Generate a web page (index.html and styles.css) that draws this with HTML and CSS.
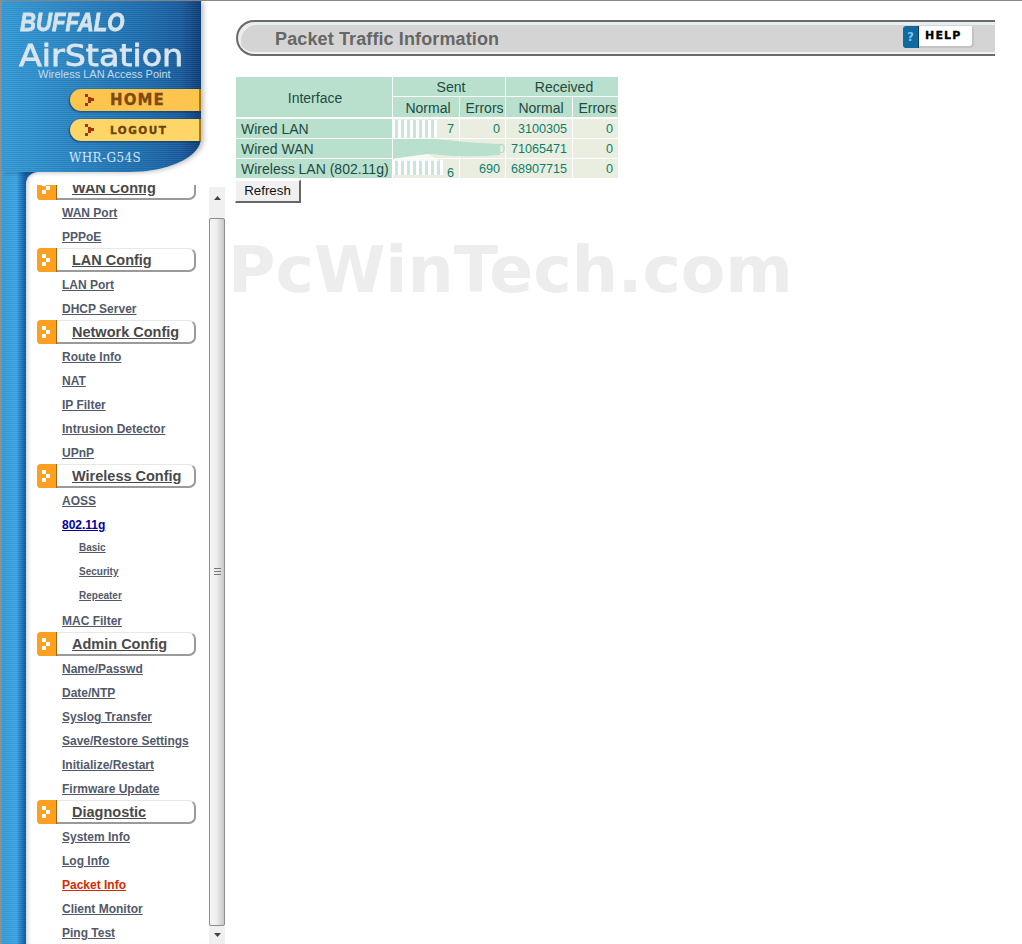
FILE: index.html
```html
<!DOCTYPE html>
<html lang="en">
<head>
<meta charset="utf-8">
<title>Packet Traffic Information</title>
<link rel="stylesheet" href="styles.css">
</head>
<body>
<div class="page">
  <aside class="side">
    <header class="brand">
      <div class="logo-buffalo">BUFFALO</div>
      <div class="logo-air">AirStation</div>
      <div class="logo-sub">Wireless LAN Access Point</div>
      <a class="pill pill-home" href="#">
        <svg class="pill-mark" width="9" height="12" viewBox="0 0 9 12"><path d="M0 0h3v3H0zM3 3h3v3H3zM6 4h3v3H6zM3 6h3v3H3zM0 9h3v3H0z" fill="#a5350c"/></svg>
        <span>HOME</span>
      </a>
      <a class="pill pill-logout" href="#">
        <svg class="pill-mark" width="9" height="12" viewBox="0 0 9 12"><path d="M0 0h3v3H0zM3 3h3v3H3zM6 4h3v3H6zM3 6h3v3H3zM0 9h3v3H0z" fill="#a5350c"/></svg>
        <span>LOGOUT</span>
      </a>
      <div class="model">WHR-G54S</div>
    </header>
    <div class="menu-area">
      <div class="menu-panel">
        <nav class="menu-clip">
          <ul class="menu">
            <li class="sec"><span class="sec-mark"><svg width="9" height="12" viewBox="0 0 9 12"><path d="M0 0h4v4H0zM4 4h4v4H4zM0 8h4v4H0z" fill="#fff"/></svg></span><a href="#">WAN Config</a></li>
            <li class="item"><a href="#">WAN Port</a></li>
            <li class="item"><a href="#">PPPoE</a></li>
            <li class="sec"><span class="sec-mark"><svg width="9" height="12" viewBox="0 0 9 12"><path d="M0 0h4v4H0zM4 4h4v4H4zM0 8h4v4H0z" fill="#fff"/></svg></span><a href="#">LAN Config</a></li>
            <li class="item"><a href="#">LAN Port</a></li>
            <li class="item"><a href="#">DHCP Server</a></li>
            <li class="sec"><span class="sec-mark"><svg width="9" height="12" viewBox="0 0 9 12"><path d="M0 0h4v4H0zM4 4h4v4H4zM0 8h4v4H0z" fill="#fff"/></svg></span><a href="#">Network Config</a></li>
            <li class="item"><a href="#">Route Info</a></li>
            <li class="item"><a href="#">NAT</a></li>
            <li class="item"><a href="#">IP Filter</a></li>
            <li class="item"><a href="#">Intrusion Detector</a></li>
            <li class="item"><a href="#">UPnP</a></li>
            <li class="sec"><span class="sec-mark"><svg width="9" height="12" viewBox="0 0 9 12"><path d="M0 0h4v4H0zM4 4h4v4H4zM0 8h4v4H0z" fill="#fff"/></svg></span><a href="#">Wireless Config</a></li>
            <li class="item"><a href="#">AOSS</a></li>
            <li class="item"><a class="visited" href="#">802.11g</a></li>
            <li class="item sub"><a href="#">Basic</a></li>
            <li class="item sub"><a href="#">Security</a></li>
            <li class="item sub"><a href="#">Repeater</a></li>
            <li class="item"><a href="#">MAC Filter</a></li>
            <li class="sec"><span class="sec-mark"><svg width="9" height="12" viewBox="0 0 9 12"><path d="M0 0h4v4H0zM4 4h4v4H4zM0 8h4v4H0z" fill="#fff"/></svg></span><a href="#">Admin Config</a></li>
            <li class="item"><a href="#">Name/Passwd</a></li>
            <li class="item"><a href="#">Date/NTP</a></li>
            <li class="item"><a href="#">Syslog Transfer</a></li>
            <li class="item"><a href="#">Save/Restore Settings</a></li>
            <li class="item"><a href="#">Initialize/Restart</a></li>
            <li class="item"><a href="#">Firmware Update</a></li>
            <li class="sec"><span class="sec-mark"><svg width="9" height="12" viewBox="0 0 9 12"><path d="M0 0h4v4H0zM4 4h4v4H4zM0 8h4v4H0z" fill="#fff"/></svg></span><a href="#">Diagnostic</a></li>
            <li class="item"><a href="#">System Info</a></li>
            <li class="item"><a href="#">Log Info</a></li>
            <li class="item"><a class="current" href="#">Packet Info</a></li>
            <li class="item"><a href="#">Client Monitor</a></li>
            <li class="item"><a href="#">Ping Test</a></li>
          </ul>
        </nav>
        <div class="scrollbar">
          <div class="sb-btn sb-up"><svg width="7" height="4" viewBox="0 0 7 4"><path d="M3.500 0 7 4H0z" fill="#444"/></svg></div>
          <div class="sb-thumb"><svg width="7" height="8" viewBox="0 0 7 8"><path d="M0 .5h7M0 3.500h7M0 6.500h7" stroke="#777" stroke-width="1"/></svg></div>
          <div class="sb-btn sb-down"><svg width="7" height="4" viewBox="0 0 7 4"><path d="M0 0h7L3.500 4z" fill="#444"/></svg></div>
        </div>
      </div>
    </div>
  </aside>
  <main class="main">
    <div class="title-bar">
      <h1 class="title">Packet Traffic Information</h1>
      <a class="help" href="#"><span class="help-q">?</span><span class="help-t">HELP</span></a>
    </div>
    <div class="table-wrap">
      <table class="traffic">
        <colgroup><col class="c-if"><col class="c-n"><col class="c-e"><col class="c-n"><col class="c-e2"></colgroup>
        <thead>
          <tr><th rowspan="2" class="h-if">Interface</th><th colspan="2">Sent</th><th colspan="2">Received</th></tr>
          <tr><th>Normal</th><th>Errors</th><th>Normal</th><th>Errors</th></tr>
        </thead>
        <tbody>
          <tr><th>Wired LAN</th><td>7</td><td>0</td><td>3100305</td><td>0</td></tr>
          <tr><th>Wired WAN</th><td></td><td class="flush">0</td><td>71065471</td><td>0</td></tr>
          <tr><th>Wireless LAN (802.11g)</th><td><span class="low6">6</span></td><td>690</td><td>68907715</td><td>0</td></tr>
        </tbody>
      </table>
      <svg class="smudge" width="382" height="101" viewBox="236 77 382 101">
        <defs>
          <pattern id="bars" x="394" y="0" width="6" height="6" patternUnits="userSpaceOnUse">
            <rect width="6" height="6" fill="#fff"/>
            <rect x="1" width="3" height="6" fill="#c9e6d8"/>
          </pattern>
          <filter id="soft"><feGaussianBlur stdDeviation="0.7"/></filter>
        </defs>
        <rect x="393" y="120" width="44" height="18" fill="url(#bars)" filter="url(#soft)"/>
        <rect x="393" y="160" width="50" height="15" fill="url(#bars)" filter="url(#soft)"/>
        <path d="M393 139H436Q470 143 500 144V155Q462 158 432 154Q410 156 393 159Z" fill="#b8e0cc" filter="url(#soft)"/>
        <path d="M428 154Q410 156 393 159V161H440Z" fill="#fff" opacity=".7" filter="url(#soft)"/>
      </svg>
    </div>
    <button class="refresh" type="button">Refresh</button>
    <div class="watermark">PcWinTech.com</div>
  </main>
</div>
</body>
</html>
```

FILE: styles.css
```css
* { box-sizing: border-box; }
html, body { margin: 0; padding: 0; background: #fff; }
body { width: 1022px; height: 944px; overflow: hidden; font-family: "Liberation Sans", Arial, sans-serif; }
a { color: inherit; }
.page { display: flex; width: 1022px; height: 944px; border-top: 1px solid #8a8a8a; }
.main { position: relative; flex: 1; padding-left: 11px; display: flex; flex-direction: column; align-items: flex-start; }

/* left column */
.side { width: 225px; height: 943px; display: flex; flex-direction: column; border-left: 2px solid #8f8f8f; flex: none; }
.brand {
  width: 199px; height: 171px; flex: none; padding-top: 10px;
  border-bottom-right-radius: 72px 34px;
  box-shadow: 3px 1px 4px rgba(0,0,0,.22);
  background:
    repeating-linear-gradient(180deg, rgba(255,255,255,.05) 0 1px, rgba(0,0,0,.05) 1px 2px),
    linear-gradient(90deg, #349bd8 0, #2a86c4 35%, #1f6fb0 70%, #1a5c9f 90%, #0c3f7a 100%);
  display: flex; flex-direction: column; position: relative; z-index: 1;
}
.logo-buffalo {
  margin-left: 18px; font: italic bold 26px/22px "Liberation Sans", sans-serif; color: #d6e4ee;
  transform: scaleX(.85); transform-origin: left center; -webkit-text-stroke: .8px #d6e4ee;
}
.logo-air {
  margin: 9px 0 0 17px; font: 400 30px/27px "DejaVu Sans", sans-serif; color: #d9e6ef;
  transform: scaleX(1.11); transform-origin: left center; -webkit-text-stroke: .8px #d9e6ef;
}
.logo-sub { margin: -1px 0 0 36px; font: 11px/13px "Liberation Sans", sans-serif; color: #c3dcec; white-space: nowrap; }
.pill {
  display: flex; align-items: center; width: 131px; height: 22px; margin-left: 68px;
  border-radius: 11px 0 0 11px; text-decoration: none; font-family: "DejaVu Sans", sans-serif; font-weight: 700;
  box-shadow: -1px 1px 2px rgba(0,30,80,.55);
}
.pill-mark { margin-left: 15px; flex: none; }
.pill-home { margin-top: 8px; background: #fdc44e; border-right: 2px solid #a87a10; color: #7c4a12; font-size: 15px; letter-spacing: 1.100px; }
.pill-home span { margin-left: 16px; -webkit-text-stroke: .3px #7c4a12; }
.pill-logout { margin-top: 8px; background: #fed667; border-right: 2px solid #a87a10; color: #6b420a; font-size: 10.500px; letter-spacing: 1.500px; }
.pill-logout span { margin-left: 16px; -webkit-text-stroke: .3px #6b420a; }
.model { margin: 10px 0 0 67px; font: 12px/15px "DejaVu Serif", serif; letter-spacing: .4px; color: #d3e6f6; }

.menu-area {
  flex: 1; min-height: 0; display: flex;
  background:
    linear-gradient(#1a5c9f, #1a5c9f) no-repeat 24px 0 / 14px 14px,
    repeating-linear-gradient(180deg, rgba(255,255,255,.06) 0 1px, rgba(0,0,0,.04) 1px 2px) no-repeat 0 0 / 24px 100%,
    linear-gradient(90deg, #349bd8 0, #3aa3e2 60%, #1a70bb 85%, #0d55a0 100%) no-repeat 0 0 / 24px 100%;
}
.menu-panel {
  margin-left: 24px; width: 199px; display: flex; background: #fff;
  border-top-left-radius: 12px; box-shadow: inset 5px 0 4px -3px rgba(0,0,0,.18);
}
.menu-clip { width: 183px; margin-top: 13px; overflow: hidden; flex: none; }
.menu { list-style: none; margin: -9px 0 0; padding: 0; }
.item { height: 24px; padding-left: 36px; font-size: 12px; font-weight: 700; line-height: 27px; color: #52596a; white-space: nowrap; }
.item.sub { padding-left: 53px; font-size: 10px; line-height: 23px; }
.visited { color: #0000a0; }
.current { color: #d62a00; }
.sec {
  display: flex; align-items: center; height: 24px; width: 159px; margin-left: 11px;
  border: 1px solid #e8e8e8; border-right: 2px solid #9a9a9a; border-bottom: 2px solid #9a9a9a;
  border-radius: 4px 7px 7px 4px; font-size: 14.500px; font-weight: 700; color: #494949; background: #fff; white-space: nowrap;
}
.sec-mark {
  width: 20px; height: 24px; margin: -1px 15px -2px -1px; flex: none; display: flex; align-items: center; justify-content: center;
  background: #fd9f1f; border-right: 1px solid #a8650f; border-radius: 4px 0 0 4px;
}

.scrollbar { width: 16px; margin-top: 15px; display: flex; flex-direction: column; flex: none; background: #f0f0f0; }
.sb-btn { display: flex; justify-content: center; background: #f0f0f0; flex: none; }
.sb-up { height: 31px; padding-top: 9px; }
.sb-down { height: 18px; padding-top: 7px; }
.sb-thumb {
  flex: 1; display: flex; align-items: center; justify-content: center;
  border: 1px solid #8d8d8d; border-radius: 2px;
  background: linear-gradient(90deg, #f4f4f4 0, #eeeeee 45%, #c8c8c8 100%);
}

/* title bar */
.title-bar {
  width: 759px; height: 36px; margin-top: 19px; display: flex; align-items: center; justify-content: space-between; flex: none;
  border: solid #6a6a6a; border-width: 2px 0 2px 2px; border-radius: 18px 0 0 18px;
  background: #d4d4d4; box-shadow: inset 3px 3px 0 #e9eef0, inset 0 -2px 0 #f3f3f3;
}
.title { margin: 2px 0 0 37px; font-size: 18px; letter-spacing: .12px; line-height: 30px; font-weight: 700; color: #666; }
.help { display: flex; width: 71px; height: 22px; margin-right: 21px; margin-top: -3px; text-decoration: none; border-radius: 3px; overflow: hidden; background: #fff; box-shadow: inset -2px -2px 0 #c4c4c4; }
.help-q { width: 16px; flex: none; background: #0e6a9f; color: #7fc4e8; font: 700 12px/22px "DejaVu Sans", sans-serif; text-align: center; border-right: 1px solid #0a3e66; }
.help-t { margin-left: 6px; color: #000; font: 700 11px/20px "DejaVu Sans", sans-serif; letter-spacing: 1.200px; -webkit-text-stroke: .3px #000; }

/* table */
.table-wrap { position: relative; margin-top: 21px; flex: none; }
.traffic { border-collapse: separate; border-spacing: 0; table-layout: fixed; width: 382px; font-size: 14px; }
.c-if { width: 157px; }
.c-n { width: 67px; }
.c-e { width: 46px; }
.c-e2 { width: 45px; }
.traffic th, .traffic td { padding: 1px 0 0; height: 20px; border-right: 1px solid #fff; border-bottom: 1px solid #fff; line-height: 18px; white-space: nowrap; }
.traffic th:last-child, .traffic td:last-child { border-right: 0; }
.traffic th { background: #b8e0cc; font-weight: 400; color: #1f4a44; }
.traffic thead th { padding-left: 4px; }
.traffic thead .h-if { padding-left: 2px; }
.traffic thead tr:last-child th { border-bottom-width: 2px; height: 22px; }
.traffic thead .h-if { border-bottom-width: 2px; }
.traffic tbody th { text-align: left; padding-left: 5px; overflow: visible; }
.traffic td { background: #eaeee0; color: #0a7d6a; font-size: 12.600px; text-align: right; padding-right: 5px; }
.traffic td.flush { padding-right: 0; color: #b9d4c8; }
.traffic tbody tr:last-child th, .traffic tbody tr:last-child td { border-bottom: 0; height: 19px; }
.low6 { position: relative; top: 4px; }
.smudge { position: absolute; left: 0; top: 0; pointer-events: none; }

.refresh {
  width: 66px; height: 23px; margin: 2px 0 0 -1px; padding: 0 0 2px; flex: none;
  font: 13.300px "Liberation Sans", sans-serif; color: #111; background: #f0f0f0;
  border: 1px solid #fff; border-right: 2px solid #666; border-bottom: 2px solid #666;
}
.watermark {
  position: absolute; left: 3px; top: 233px; font: 700 64.800px/72px "DejaVu Sans", sans-serif; color: #ededed; white-space: nowrap;
}
```
